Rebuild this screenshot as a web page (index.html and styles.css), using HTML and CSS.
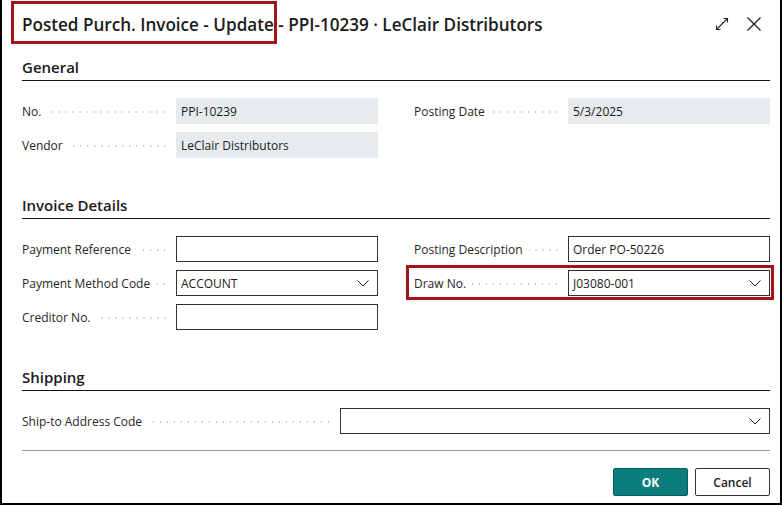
FILE: index.html
```html
<!DOCTYPE html>
<html lang="en">
<head>
<meta charset="utf-8">
<title>Posted Purch. Invoice - Update</title>
<link rel="stylesheet" href="styles.css">
</head>
<body>
<div class="dialog">
  <header class="head">
    <h1 class="title"><span class="mark">Posted Purch. Invoice - Update</span> - PPI-10239 · LeClair Distributors</h1>
    <div class="head-icons">
      <svg class="ico" width="16" height="16" viewBox="0 0 16 16"><path d="M2.5 13.5 L13.5 2.5 M9.5 2.5 H13.5 V6.5 M2.5 9.5 V13.5 H6.5" fill="none" stroke="#222" stroke-width="1.1"/></svg>
      <svg class="ico" width="16" height="16" viewBox="0 0 16 16"><path d="M1.5 1.5 L14.5 14.5 M14.5 1.5 L1.5 14.5" fill="none" stroke="#222" stroke-width="1.4"/></svg>
    </div>
  </header>

  <section class="sec first">
    <h2 class="sec-title">General</h2>
    <div class="grid">
      <div class="col">
        <div class="field"><div class="lblcell"><span class="lbl">No.</span><span class="dots"></span></div><div class="ctl ro">PPI-10239</div></div>
        <div class="field"><div class="lblcell"><span class="lbl">Vendor</span><span class="dots"></span></div><div class="ctl ro">LeClair Distributors</div></div>
      </div>
      <div class="col">
        <div class="field"><div class="lblcell"><span class="lbl">Posting Date</span><span class="dots"></span></div><div class="ctl ro">5/3/2025</div></div>
      </div>
    </div>
  </section>

  <section class="sec">
    <h2 class="sec-title">Invoice Details</h2>
    <div class="grid">
      <div class="col">
        <div class="field"><div class="lblcell"><span class="lbl">Payment Reference</span><span class="dots"></span></div><div class="ctl"></div></div>
        <div class="field"><div class="lblcell"><span class="lbl">Payment Method Code</span><span class="dots"></span></div><div class="ctl sel">ACCOUNT<svg class="chev" width="12" height="7" viewBox="0 0 12 7"><path d="M0.5 0.5 L6 6 L11.5 0.5" fill="none" stroke="#222" stroke-width="1"/></svg></div></div>
        <div class="field"><div class="lblcell"><span class="lbl">Creditor No.</span><span class="dots"></span></div><div class="ctl"></div></div>
      </div>
      <div class="col">
        <div class="field"><div class="lblcell"><span class="lbl">Posting Description</span><span class="dots"></span></div><div class="ctl">Order PO-50226</div></div>
        <div class="field marked"><div class="lblcell"><span class="lbl">Draw No.</span><span class="dots"></span></div><div class="ctl sel">J03080-001<svg class="chev" width="12" height="7" viewBox="0 0 12 7"><path d="M0.5 0.5 L6 6 L11.5 0.5" fill="none" stroke="#222" stroke-width="1"/></svg></div></div>
      </div>
    </div>
  </section>

  <section class="sec last">
    <h2 class="sec-title">Shipping</h2>
    <div class="rows">
      <div class="field"><div class="lblcell wide"><span class="lbl">Ship-to Address Code</span><span class="dots"></span></div><div class="ctl sel"><svg class="chev" width="12" height="7" viewBox="0 0 12 7"><path d="M0.5 0.5 L6 6 L11.5 0.5" fill="none" stroke="#222" stroke-width="1"/></svg></div></div>
    </div>
  </section>

  <div class="sep"></div>

  <footer class="foot">
    <button class="btn ok">OK</button>
    <button class="btn cancel">Cancel</button>
  </footer>
</div>
</body>
</html>
```

FILE: styles.css
```css
* { box-sizing: border-box; }
html, body { margin: 0; padding: 0; background: #fff; }
body {
  font-family: "Open Sans", "Noto Sans", "Liberation Sans", sans-serif;
  color: #222;
  width: 782px;
  height: 505px;
  overflow: hidden;
}
.dialog {
  width: 782px;
  height: 505px;
  border: 2px solid #000;
  border-top: none;
  padding: 0 10px 0 20px;
  display: flex;
  flex-direction: column;
}
.head {
  height: 48px;
  display: flex;
  align-items: center;
  justify-content: space-between;
}
.title {
  margin: 0;
  margin-top: 2px;
  font-size: 17.1px;
  line-height: 24px;
  font-weight: 600;
  color: #1b1b1b;
}
.mark { position: relative; }
.mark::after {
  content: "";
  position: absolute;
  left: -11px;
  right: -3px;
  top: -12px;
  bottom: -8px;
  border: 3px solid #a3141a;
}
.head-icons {
  display: flex;
  align-items: center;
  gap: 16px;
  margin-right: 8px;
}
.ico { display: block; }

.sec { display: flex; flex-direction: column; margin-top: 37px; }
.sec.first { margin-top: 9px; }
.sec.last { margin-top: 37px; }
.sec-title {
  margin: 0;
  font-size: 15px;
  line-height: 20px;
  font-weight: 600;
  color: #1b1b1b;
  padding-bottom: 3px;
  border-bottom: 1px solid #111;
}
.grid {
  margin-top: 17px;
  display: grid;
  grid-template-columns: 1fr 1fr;
  column-gap: 36px;
}
.rows { margin-top: 17px; display: flex; flex-direction: column; gap: 8px; }
.col { display: flex; flex-direction: column; gap: 8px; }
.field {
  display: flex;
  align-items: center;
  height: 26px;
  position: relative;
}
.lblcell {
  width: 154px;
  flex: none;
  display: flex;
  align-items: center;
  padding-right: 8px;
}
.lblcell.wide { width: 318px; }
.lbl {
  font-size: 12px;
  color: #262626;
  white-space: nowrap;
  padding-right: 6px;
}
.dots {
  flex: 1;
  height: 2px;
  margin-top: 2px;
  background-image: radial-gradient(circle, #bcbcbc 0.7px, transparent 0.9px);
  background-size: 7px 2px;
  background-position: right center;
  background-repeat: repeat-x;
}
.ctl {
  flex: 1;
  height: 26px;
  border: 1px solid #333;
  font-size: 12px;
  color: #1b1b1b;
  padding: 0 4px;
  display: flex;
  align-items: center;
  justify-content: space-between;
}
.ctl.ro {
  background: #e8ebee;
  border-color: #e8ebee;
}
.ctl.sel { padding-right: 8px; }
.chev { display: block; margin-left: auto; }
.marked::after {
  content: "";
  position: absolute;
  left: -8px;
  right: -4px;
  top: -5px;
  bottom: -4px;
  border: 3px solid #a3141a;
  pointer-events: none;
}
.sep {
  margin-top: 16px;
  border-top: 1px solid #9a9a9a;
}
.foot {
  margin-top: 17px;
  display: flex;
  justify-content: flex-end;
  gap: 7px;
}
.btn {
  width: 75px;
  height: 28px;
  font-family: "Open Sans", "Noto Sans", "Liberation Sans", sans-serif;
  font-size: 12px;
  border-radius: 2px;
  padding: 0;
}
.ok {
  background: #0b7d7d;
  border: 1px solid #065f5e;
  color: #fff;
  font-weight: 700;
}
.cancel {
  background: #fff;
  border: 1px solid #333;
  color: #1b1b1b;
  font-weight: 600;
}
```
